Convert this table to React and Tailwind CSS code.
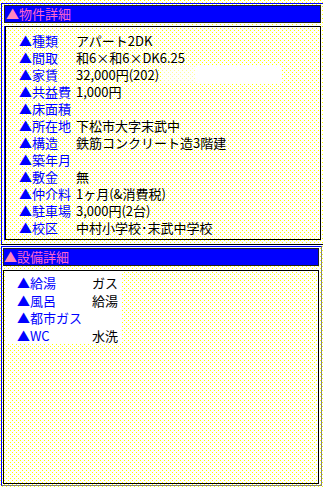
import React from 'react';

// yellow halftone fill used by the old table cells
const dots =
  'bg-white bg-[conic-gradient(at_1px_1px,transparent_75%,#ffff00_0),conic-gradient(at_1px_1px,transparent_75%,#ffff00_0)] bg-[length:4px_4px] bg-[position:0_0,2px_2px]';

const bukken = [
  ['種類', 'アパート2DK'],
  ['間取', '和6×和6×DK6.25'],
  ['家賃', '32,000円(202)'],
  ['共益費', '1,000円'],
  ['床面積', ''],
  ['所在地', '下松市大字末武中'],
  ['構造', '鉄筋コンクリート造3階建'],
  ['築年月', ''],
  ['敷金', '無'],
  ['仲介料', '1ヶ月(&消費税)'],
  ['駐車場', '3,000円(2台)'],
  ['校区', '中村小学校･末武中学校'],
];

const setsubi = [
  ['給湯', 'ガス'],
  ['風呂', '給湯'],
  ['都市ガス', ''],
  ['WC', '水洗'],
];

const Header = ({ title, className }) => (
  <div
    className={`h-[18px] border border-[#202020] bg-[#0000ff] flex items-center text-[13px] leading-[16px] text-[#ff66cc] ${className}`}
  >
    <span className="text-[#ff88bb]">▲</span>
    <span>{title}</span>
  </div>
);

const App = () => {
  return (
    <div
      className={`w-[323px] h-[487px] pt-[3px] overflow-hidden ${dots}`}
      style={{ fontFamily: '"Noto Sans CJK JP", "Liberation Sans", sans-serif' }}
    >
      {/* 物件詳細 */}
      <div className="ml-[1px] w-[322px] border-t border-l border-b border-t-[#0000ff] border-l-[#0000ff] border-b-black pb-[4px]">
        <Header title="物件詳細" className="mt-[1px] ml-[2px] w-[317px] pl-[1px]" />
        <div className="mt-[3px] ml-[2px] w-[317px] border-l border-[#0000ff]">
          <div className="h-[214px] border border-black pt-[5px] pl-[13px] text-[13px]">
            {bukken.map(([label, value]) => (
              <div key={label} className="h-[17px] flex items-center">
                <span className="block h-[17px] leading-[17px] w-[57px] shrink-0 text-[#0000ff] whitespace-nowrap">
                  ▲{label}
                </span>
                <span className="block h-[17px] leading-[17px] text-black whitespace-nowrap">{value}</span>
                {label === '家賃' && (
                  <div className="ml-auto mr-[39px] flex h-[19px]">
                    <div className="w-[35px] bg-white/60" />
                    <div className="w-[85px] bg-white" />
                  </div>
                )}
              </div>
            ))}
          </div>
        </div>
      </div>

      {/* 設備詳細 */}
      <div className="mt-[1px] ml-[1px] w-[321px] h-[240px] border-t border-l border-b border-r border-t-[#0000ff] border-l-[#0000ff] border-b-[#808080] border-r-[#808080]">
        <Header title="設備詳細" className="mt-[1px] ml-[1px] w-[316px]" />
        <div className="mt-[4px] ml-[1px] w-[316px] h-[214px] border border-black">
          <div className="ml-[2px] w-[116px] h-[73px] bg-white pt-[3px] pl-[11px] text-[13px]">
            {setsubi.map(([label, value]) => (
              <div key={label} className="h-[17.5px] flex items-center">
                <span className="block h-[17px] leading-[17px] w-[75px] shrink-0 text-[#0000ff] whitespace-nowrap">
                  ▲{label}
                </span>
                <span className="block h-[17px] leading-[17px] text-black whitespace-nowrap">{value}</span>
              </div>
            ))}
          </div>
        </div>
      </div>
    </div>
  );
};

export default App;
